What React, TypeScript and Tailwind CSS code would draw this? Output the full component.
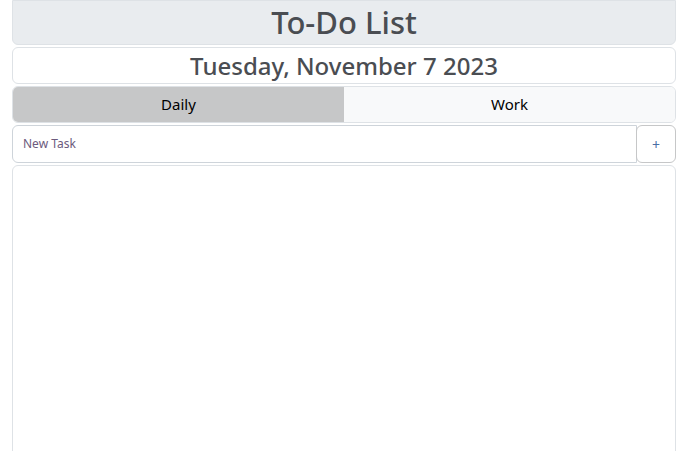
import React from "react";

export default function App() {
  return (
    <div
      className="w-[686px] h-[451px] overflow-hidden bg-white pl-[12px] pr-[10px] flex flex-col gap-[2px]"
      style={{ fontFamily: '"Noto Sans", "Open Sans", sans-serif' }}
    >
      <div className="h-[45px] shrink-0 bg-[#e9ecef] border border-[#dee2e6] rounded-b-[6px] flex items-center justify-center">
        <h1 className="text-[31px] leading-none font-medium text-[#4a4d52]">To-Do List</h1>
      </div>
      <div className="h-[37px] shrink-0 bg-white border border-[#dee2e6] rounded-[6px] flex items-center justify-center">
        <h2 className="text-[24px] leading-none font-medium text-[#4a4d52]">Tuesday, November 7 2023</h2>
      </div>
      <div className="h-[37px] shrink-0 border border-[#dee2e6] rounded-[6px] overflow-hidden flex">
        <button className="flex-1 bg-[#c6c7c8] text-[15px] text-black">Daily</button>
        <button className="flex-1 bg-[#f8f9fa] text-[15px] text-black">Work</button>
      </div>
      <div className="h-[38px] shrink-0 flex">
        <input
          className="flex-1 border border-[#ced4da] rounded-l-[6px] px-[10px] text-[12px] outline-none placeholder:text-[#6c5a7d]"
          placeholder="New Task"
        />
        <button className="w-[40px] border border-[#c6c7c8] rounded-[6px] text-[14px] text-[#4a6fa5] flex items-center justify-center -ml-[1px]">
          +
        </button>
      </div>
      <div className="h-[320px] shrink-0 border border-[#dee2e6] rounded-t-[6px]"></div>
    </div>
  );
}
